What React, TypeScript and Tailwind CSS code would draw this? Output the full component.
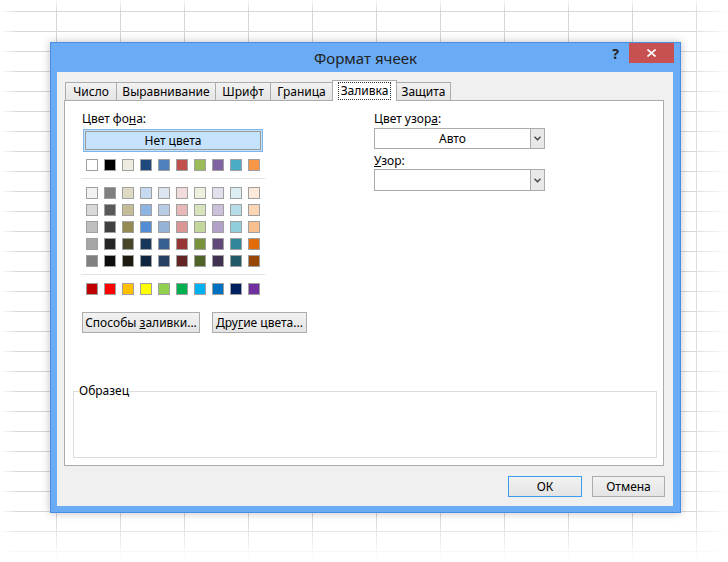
import React from "react";

const THEME = ["#FFFFFF", "#000000", "#EEECE1", "#1F497D", "#4F81BD", "#C0504D", "#9BBB59", "#8064A2", "#4BACC6", "#F79646"];

const TINTS = [
  ["#F2F2F2", "#7F7F7F", "#DDD9C4", "#C5D9F1", "#DCE6F1", "#F2DCDB", "#EBF1DE", "#E4DFEC", "#DAEEF3", "#FDE9D9"],
  ["#D9D9D9", "#595959", "#C4BD97", "#8DB4E2", "#B8CCE4", "#E6B8B7", "#D8E4BC", "#CCC0DA", "#B7DEE8", "#FCD5B4"],
  ["#BFBFBF", "#404040", "#948A54", "#538DD5", "#95B3D7", "#DA9694", "#C4D79B", "#B1A0C7", "#92CDDC", "#FABF8F"],
  ["#A6A6A6", "#262626", "#494529", "#16365C", "#366092", "#963634", "#76933C", "#60497A", "#31869B", "#E26B0A"],
  ["#808080", "#0D0D0D", "#1D1B10", "#0F243E", "#244062", "#632523", "#4F6228", "#403151", "#215967", "#974706"],
];

const STANDARD = ["#C00000", "#FF0000", "#FFC000", "#FFFF00", "#92D050", "#00B050", "#00B0F0", "#0070C0", "#002060", "#7030A0"];

const TABS = [
  { label: "Число", w: "w-[52px]" },
  { label: "Выравнивание", w: "w-[100px]" },
  { label: "Шрифт", w: "w-[56px]" },
  { label: "Граница", w: "w-[63px]" },
  { label: "Заливка", w: "w-[65px]", active: true },
  { label: "Защита", w: "w-[55px]" },
];

// ============================================
// SMALL PARTS
// ============================================

const Row: React.FC<{ colors: string[] }> = ({ colors }) => (
  <div className="flex gap-[6px]">
    {colors.map((c) => (
      <div
        key={c}
        className="w-[12px] h-[12px] border border-[#a0a0a0]"
        style={{ backgroundColor: c }}
      />
    ))}
  </div>
);

const Chevron = () => (
  <svg width="7" height="5" viewBox="0 0 7 5">
    <path d="M0.5 0.8 L3.5 3.8 L6.5 0.8" fill="none" stroke="#404040" strokeWidth="1.3" />
  </svg>
);

const Select: React.FC<{ value?: string; h: string }> = ({ value, h }) => (
  <div className={`flex w-[171px] ${h} border border-[#acacac] bg-white`}>
    <div className="flex-1 flex items-center justify-center">{value}</div>
    <div className="w-[14px] flex items-center justify-center border-l border-[#acacac] bg-[#e8e8e8]">
      <Chevron />
    </div>
  </div>
);

const Button: React.FC<{ w: string; primary?: boolean; children: React.ReactNode }> = ({ w, primary, children }) => (
  <div
    className={`${w} h-[21px] flex items-center justify-center border bg-gradient-to-b from-[#f2f2f2] to-[#e4e4e4] ${
      primary ? "border-[#3c9af0]" : "border-[#acacac]"
    }`}
  >
    {children}
  </div>
);

const Separator = () => <div className="w-[184px] h-px bg-[#e2e2e2] -ml-px" />;

// ============================================
// APP
// ============================================

const App: React.FC = () => {
  return (
    <div
      className="w-[728px] h-[562px] overflow-hidden pl-[50px] pt-[42px] text-[12px] text-black bg-white bg-[linear-gradient(to_right,#fff,rgba(255,255,255,0)_18px,rgba(255,255,255,0)_690px,#fff),linear-gradient(to_bottom,rgba(255,255,255,0.8),rgba(255,255,255,0)_12px,rgba(255,255,255,0)_515px,#fff_560px),linear-gradient(to_right,#d6d6d6_1px,transparent_1px),linear-gradient(to_bottom,#d6d6d6_1px,transparent_1px)] bg-[size:100%_100%,100%_100%,64px_20px,64px_20px] bg-[position:0_0,0_0,56px_0,0_11px]"
      style={{ fontFamily: '"Noto Sans", "Open Sans", sans-serif' }}
    >
      {/* Dialog */}
      <div className="w-[631px] h-[471px] flex flex-col border border-[#4a8ee0] bg-[#69abf5] shadow-[0_0_8px_rgba(0,0,0,0.25)]">

        {/* Title bar */}
        <div className="h-[29px] grid grid-cols-[1fr_auto_1fr]">
          <div />
          <div className="pt-[4px] text-[15px] text-[#222]">Формат ячеек</div>
          <div className="flex justify-end items-start pr-[6px]">
            <div className="mt-[2px] mr-[10px] text-[14px] font-bold text-[#222] leading-[18px]">?</div>
            <div className="w-[45px] h-[20px] bg-[#c75050] flex items-center justify-center">
              <svg width="9" height="8" viewBox="0 0 9 8">
                <path d="M0.5 0.5 L8.5 7.5 M8.5 0.5 L0.5 7.5" stroke="#fff" strokeWidth="1.6" />
              </svg>
            </div>
          </div>
        </div>

        {/* Body */}
        <div className="mx-[6px] w-[616px] h-[434px] bg-[#f0f0f0] flex flex-col">

          {/* Tabs */}
          <div className="flex items-end mt-[8px] ml-[9px] h-[20px] leading-[16px]">
            {TABS.map((t) =>
              t.active ? (
                <div
                  key={t.label}
                  className={`${t.w} h-[21px] -mb-px -ml-px relative z-10 flex items-center justify-center border border-b-0 border-[#acacac] bg-white`}
                >
                  <span className="outline outline-1 outline-dotted outline-[#333] px-[2px]">{t.label}</span>
                </div>
              ) : (
                <div
                  key={t.label}
                  className={`${t.w} h-[18px] -ml-px flex items-center justify-center border border-b-0 border-[#acacac] bg-gradient-to-b from-[#f2f2f2] to-[#e5e5e5]`}
                >
                  {t.label}
                </div>
              )
            )}
          </div>

          {/* Panel */}
          <div className="ml-[7px] w-[600px] h-[366px] border border-[#acacac] bg-white leading-[16px]">

            <div className="flex pl-[17px] pt-[10px]">

              {/* Background colour */}
              <div className="w-[292px] flex flex-col">
                <div>
                  Цвет фо<u>н</u>а:
                </div>

                <div className="mt-[2px] ml-px w-[180px] h-[23px] border border-[#7eb4ea] bg-[#c4e2fc] p-[1px]">
                  <div className="w-full h-full border border-[#9a9a9a] flex items-center justify-center">
                    Нет цвета
                  </div>
                </div>

                <div className="mt-[7px] ml-[4px]">
                  <Row colors={THEME} />
                </div>

                <div className="mt-[7px]">
                  <Separator />
                </div>

                <div className="mt-[8px] ml-[4px] flex flex-col gap-[5px]">
                  {TINTS.map((r, i) => (
                    <Row key={i} colors={r} />
                  ))}
                </div>

                <div className="mt-[7px]">
                  <Separator />
                </div>

                <div className="mt-[8px] ml-[4px]">
                  <Row colors={STANDARD} />
                </div>

                <div className="mt-[17px] flex gap-[12px]">
                  <Button w="w-[118px]">
                    <span>
                      Способы <u>з</u>аливки...
                    </span>
                  </Button>
                  <Button w="w-[95px]">
                    <span>
                      Дру<u>г</u>ие цвета...
                    </span>
                  </Button>
                </div>
              </div>

              {/* Pattern */}
              <div className="flex flex-col">
                <div>
                  Цвет узор<u>а</u>:
                </div>
                <div className="mt-[1px]">
                  <Select value="Авто" h="h-[21px]" />
                </div>
                <div className="mt-[4px]">
                  <u>У</u>зор:
                </div>
                <Select h="h-[22px]" />
              </div>
            </div>

            {/* Sample */}
            <fieldset className="mt-[50px] ml-[8px] w-[584px] h-[75px] border border-[#dcdcdc]">
              <legend className="ml-[5px] leading-[16px]">Образец</legend>
            </fieldset>
          </div>

          {/* Footer buttons */}
          <div className="mt-[10px] pr-[8px] flex justify-end gap-[10px]">
            <Button w="w-[74px]" primary>
              ОК
            </Button>
            <Button w="w-[73px]">Отмена</Button>
          </div>
        </div>
      </div>
    </div>
  );
};

export default App;
